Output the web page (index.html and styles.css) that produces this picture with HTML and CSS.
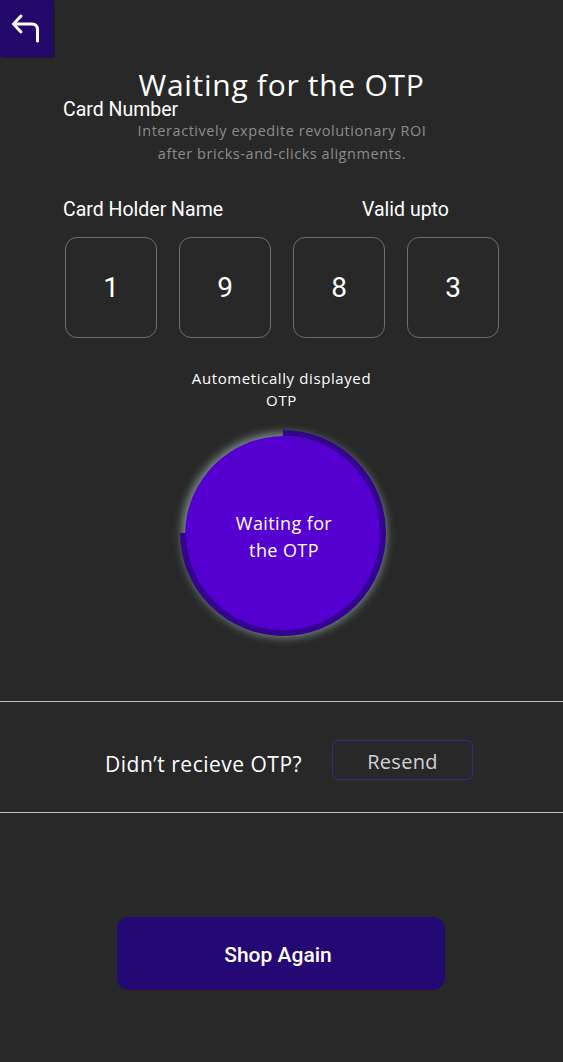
FILE: index.html
```html
<!DOCTYPE html>
<html>
<head>
<meta charset="utf-8">
<link rel="stylesheet" href="styles.css">
</head>
<body>
<div class="page">
  <div class="topbar">
    <button class="back" aria-label="Back">
      <svg width="53" height="57" viewBox="0 0 53 57" fill="none" stroke="#ffffff" stroke-width="3" stroke-linecap="round" stroke-linejoin="round">
        <path d="M21 16 L13.5 24 L21 32"/>
        <path d="M14 24 H32 Q37.5 24 37.5 30 V41"/>
      </svg>
    </button>
  </div>
  <h1 class="title">Waiting for the OTP</h1>
  <div class="label card-number">Card Number</div>
  <p class="subtitle">Interactively expedite revolutionary ROI<br>after bricks-and-clicks alignments.</p>
  <div class="labels">
    <span class="label holder">Card Holder Name</span>
    <span class="label">Valid upto</span>
  </div>
  <div class="digits">
    <div class="digit">1</div>
    <div class="digit">9</div>
    <div class="digit">8</div>
    <div class="digit">3</div>
  </div>
  <p class="auto">Autometically displayed<br>OTP</p>
  <div class="timer-wrap">
    <div class="timer">
      <div class="disc">Waiting for<br>the OTP</div>
      <svg class="ring" width="206" height="206" viewBox="0 0 206 206" fill="none">
        <path d="M103 3 A100 100 0 1 1 3 103" stroke="#33048f" stroke-width="6"/>
      </svg>
    </div>
  </div>
  <div class="resend-row">
    <span class="q">Didn’t recieve OTP?</span>
    <button class="resend">Resend</button>
  </div>
  <div class="shop-wrap">
    <button class="shop">Shop Again</button>
  </div>
</div>
</body>
</html>
```
FILE: styles.css
```css
* { box-sizing: border-box; }
html, body { margin: 0; padding: 0; background: #282828; }
body { width: 563px; height: 1062px; overflow: hidden; }
.page {
  width: 563px;
  height: 1062px;
  background: #282828;
  color: #ffffff;
  font-family: "Open Sans", "Noto Sans", sans-serif;
  display: flex;
  flex-direction: column;
}
.topbar { height: 56px; display: flex; }
.back {
  width: 53px;
  height: 57px;
  background: #22086b;
  border: none;
  padding: 0;
  margin: 0;
  display: block;
  box-shadow: 2px 1px 0 #1c1b22;
}
.back svg { display: block; }
.title {
  margin: 14px 0 0 0;
  font-weight: 400;
  font-size: 30px;
  line-height: 29px;
  text-align: center;
  letter-spacing: 0.7px;
}
.label {
  font-family: Roboto, "Liberation Sans", sans-serif;
  font-size: 19.5px;
  line-height: 20px;
  color: #ffffff;
}
.card-number { margin-left: 63px; margin-top: 1px; line-height: 19px; }
.subtitle {
  margin: 0;
  font-size: 14.5px;
  line-height: 23px;
  color: #8c8c8c;
  text-align: center;
  letter-spacing: 0.55px;
  padding-left: 1px;
}
.labels {
  display: flex;
  margin: 35px 0 0 63px;
}
.holder { width: 299px; }
.digits {
  display: flex;
  gap: 22px;
  margin: 17px 0 0 65px;
}
.digit {
  width: 92px;
  height: 101px;
  border: 1px solid #6e6e75;
  border-radius: 12px;
  display: flex;
  align-items: center;
  justify-content: center;
  font-family: Roboto, "Liberation Sans", sans-serif;
  font-size: 28px;
}
.auto {
  margin: 29px 0 0 0;
  font-size: 15px;
  line-height: 22px;
  letter-spacing: 0.6px;
  text-align: center;
}
.timer-wrap {
  display: flex;
  margin-top: 19px;
  padding-left: 180px;
}
.timer {
  position: relative;
  width: 206px;
  height: 206px;
  padding: 6px 0 0 5px;
}
.disc {
  width: 198px;
  height: 198px;
  border-radius: 50%;
  background: #5500d1;
  box-shadow: 0 0 10px 3px rgba(190, 228, 218, 0.6);
  display: flex;
  align-items: center;
  justify-content: center;
  text-align: center;
  font-size: 18px;
  line-height: 27px;
  letter-spacing: 0.4px;
  padding-top: 3px;
}
.ring { position: absolute; left: 0; top: 0; }
.resend-row {
  margin-top: 65px;
  border-top: 1px solid #bdbdbd;
  border-bottom: 1px solid #bdbdbd;
  height: 112px;
  display: flex;
  align-items: flex-start;
  padding-left: 105px;
  padding-top: 38px;
}
.q {
  font-size: 21px;
  line-height: 28px;
  letter-spacing: 0.5px;
  width: 227px;
  margin-top: 10px;
}
.resend {
  width: 141px;
  height: 40px;
  border: 1px solid #3b2684;
  border-radius: 6px;
  background: transparent;
  color: #d2d2d2;
  font-family: "Open Sans", "Noto Sans", sans-serif;
  font-size: 20px;
  letter-spacing: 0.3px;
  padding: 2px 0 0 0;
}
.shop-wrap {
  display: flex;
  padding-left: 117px;
  margin-top: 104px;
}
.shop {
  width: 328px;
  height: 73px;
  border: none;
  border-radius: 12px;
  background: #240873;
  color: #ffffff;
  font-family: Roboto, "Liberation Sans", sans-serif;
  font-weight: 500;
  font-size: 21px;
  padding: 3px 6px 0 0;
}
```
